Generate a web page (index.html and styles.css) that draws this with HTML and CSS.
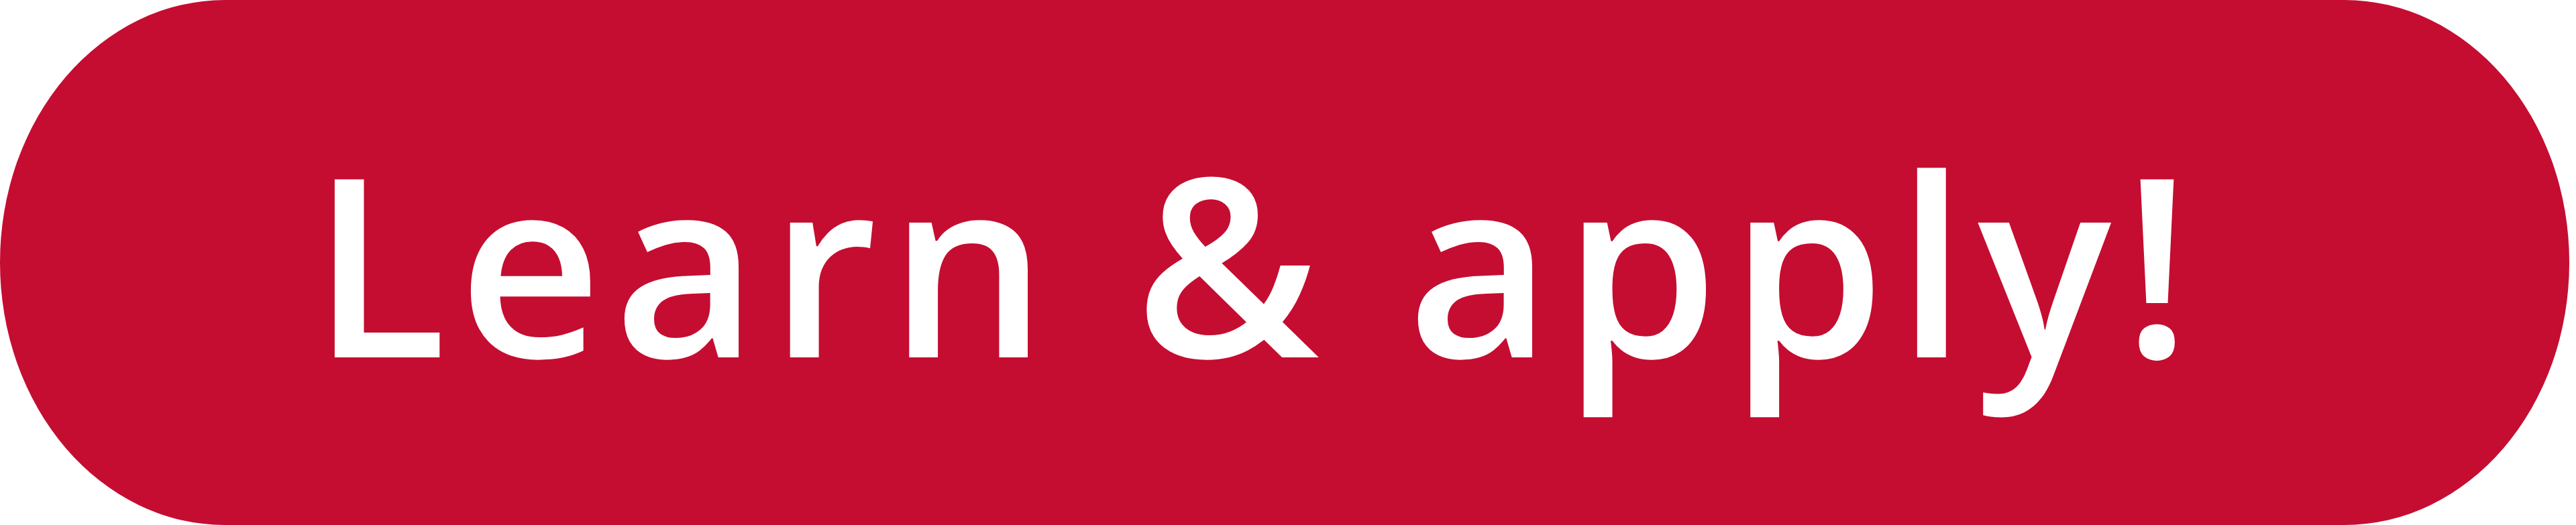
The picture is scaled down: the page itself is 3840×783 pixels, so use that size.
FILE: index.html
```html
<!DOCTYPE html>
<html lang="en">
<head>
<meta charset="utf-8">
<title>Learn &amp; apply!</title>
<link rel="stylesheet" href="styles.css">
</head>
<body>
<a class="btn" href="#">Learn &amp; apply!</a>
</body>
</html>
```
FILE: styles.css
```css
html, body {
  margin: 0;
  padding: 0;
  background: #ffffff;
}
body {
  width: 3840px;
  height: 783px;
  overflow: hidden;
}
.btn {
  box-sizing: border-box;
  display: flex;
  align-items: center;
  justify-content: flex-start;
  width: 3830px;
  height: 783px;
  padding-left: 464px;
  padding-bottom: 6px;
  background: #c50d31;
  border-radius: 335px / 391px;
  color: #ffffff;
  text-decoration: none;
  font-family: "Open Sans", "Noto Sans", sans-serif;
  font-weight: 600;
  font-size: 372px;
  line-height: 1;
  letter-spacing: 17px;
  white-space: nowrap;
}
```
